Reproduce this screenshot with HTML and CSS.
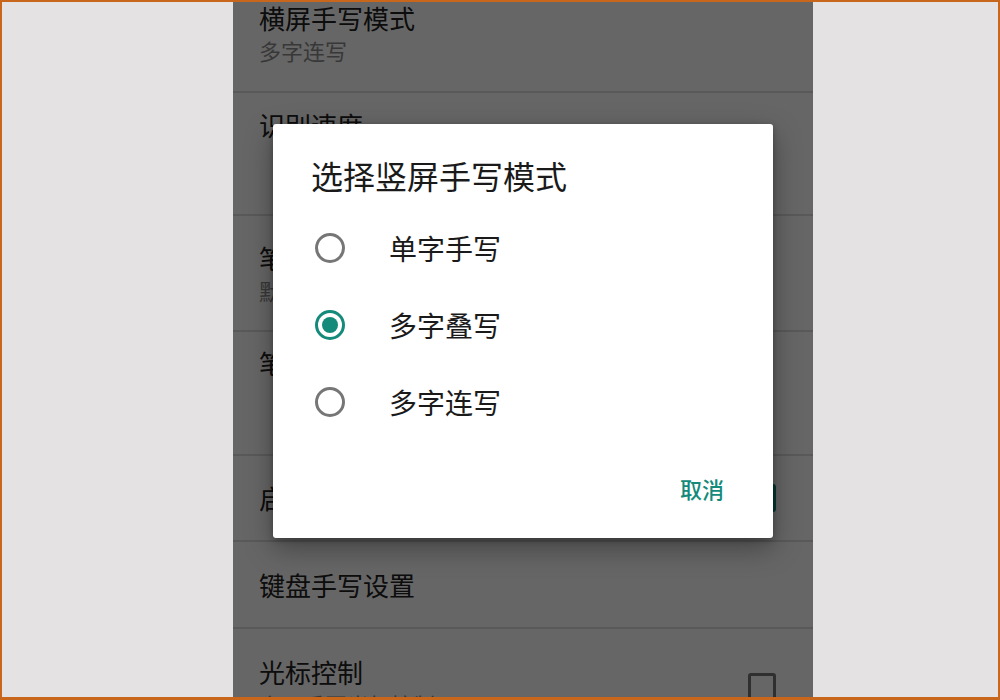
FILE: index.html
```html
<!DOCTYPE html>
<html lang="zh-CN">
<head>
<meta charset="utf-8">
<title>手写设置</title>
<link rel="stylesheet" href="styles.css">
</head>
<body>
<div class="screen">
  <div class="list">
    <div class="item item-1">
      <div class="texts">
        <div class="title">横屏手写模式</div>
        <div class="summary">多字连写</div>
      </div>
    </div>
    <div class="item item-2">
      <div class="texts">
        <div class="title">识别速度</div>
      </div>
    </div>
    <div class="item item-3">
      <div class="texts">
        <div class="title">笔迹颜色</div>
        <div class="summary">默认黑色</div>
      </div>
    </div>
    <div class="item item-4">
      <div class="texts">
        <div class="title">笔迹粗细</div>
      </div>
    </div>
    <div class="item item-5">
      <div class="texts">
        <div class="title">启用手写振动</div>
      </div>
      <div class="checkbox checked">
        <svg width="28" height="28" viewBox="0 0 28 28"><path d="M6 14.5l5 5 11-11" fill="none" stroke="#fff" stroke-width="3"/></svg>
      </div>
    </div>
    <div class="item item-6">
      <div class="texts">
        <div class="title">键盘手写设置</div>
      </div>
    </div>
    <div class="item item-7">
      <div class="texts">
        <div class="title">光标控制</div>
        <div class="summary">启用手写光标控制</div>
      </div>
      <div class="checkbox"></div>
    </div>
  </div>
  <div class="scrim"></div>
  <div class="dialog">
    <div class="dialog-title">选择竖屏手写模式</div>
    <div class="options">
      <div class="option">
        <svg class="radio" width="30" height="30" viewBox="0 0 30 30"><circle cx="15" cy="15" r="13.5" fill="none" stroke="#767676" stroke-width="3"/></svg>
        <span class="option-label">单字手写</span>
      </div>
      <div class="option">
        <svg class="radio" width="30" height="30" viewBox="0 0 30 30"><circle cx="15" cy="15" r="13.5" fill="none" stroke="#138a7a" stroke-width="3"/><circle cx="15" cy="15" r="8" fill="#138a7a"/></svg>
        <span class="option-label">多字叠写</span>
      </div>
      <div class="option">
        <svg class="radio" width="30" height="30" viewBox="0 0 30 30"><circle cx="15" cy="15" r="13.5" fill="none" stroke="#767676" stroke-width="3"/></svg>
        <span class="option-label">多字连写</span>
      </div>
    </div>
    <div class="actions">
      <div class="btn">取消</div>
    </div>
  </div>
</div>
</body>
</html>
```

FILE: styles.css
```css
html, body {
  margin: 0;
  padding: 0;
}

body {
  width: 1000px;
  height: 700px;
  box-sizing: border-box;
  border: 2px solid #c8661c;
  border-bottom-width: 3px;
  background: #e4e2e3;
  padding-left: 231px;
  overflow: hidden;
  font-family: "Noto Sans CJK SC", "Noto Sans", sans-serif;
}

.screen {
  position: relative;
  width: 580px;
  height: 695px;
  background: #ffffff;
  overflow: hidden;
}

.list {
  display: flex;
  flex-direction: column;
}

.item {
  display: flex;
  align-items: center;
  justify-content: space-between;
  border-bottom: 2px solid #dfdfdf;
  padding: 0 37px 0 26px;
}

.title {
  font-size: 26px;
  line-height: 30px;
  color: #212121;
}

.summary {
  margin-top: 4px;
  font-size: 22px;
  line-height: 26px;
  color: #8c8c8c;
}

.item-1 { align-items: flex-start; padding-top: 1px; padding-bottom: 28px; }
.item-2 { align-items: flex-start; padding-top: 17px; padding-bottom: 74px; }
.item-3 { align-items: flex-start; padding-top: 27px; padding-bottom: 27px; }
.item-4 { align-items: flex-start; padding-top: 16px; padding-bottom: 76px; }
.item-5 { min-height: 84px; }
.item-6 { min-height: 85px; }
.item-7 { padding-top: 28px; padding-bottom: 20px; border-bottom: none; }

.checkbox {
  width: 28px;
  height: 28px;
  box-sizing: border-box;
  border: 3px solid #757575;
  border-radius: 3px;
}

.checkbox.checked {
  border: none;
  background: #138a7a;
}

.checkbox svg {
  display: block;
}

.scrim {
  position: absolute;
  inset: 0;
  background: rgba(0, 0, 0, 0.6);
}

.dialog {
  position: absolute;
  left: 40px;
  top: 122px;
  width: 500px;
  background: #ffffff;
  border-radius: 3px;
  box-shadow: 0 10px 28px rgba(0, 0, 0, 0.35), 0 2px 6px rgba(0, 0, 0, 0.25);
}

.dialog-title {
  padding: 31px 38px 0;
  font-size: 32px;
  line-height: 40px;
  color: #1a1a1a;
}

.options {
  margin-top: 14px;
  display: flex;
  flex-direction: column;
}

.option {
  display: flex;
  align-items: center;
  height: 77px;
  padding-left: 42px;
}

.radio {
  display: block;
  flex: none;
}

.option-label {
  margin-left: 44px;
  font-size: 28px;
  line-height: 34px;
  color: #1a1a1a;
}

.actions {
  display: flex;
  justify-content: flex-end;
  padding: 24px 33px 26px;
}

.btn {
  height: 48px;
  padding: 0 16px;
  display: flex;
  align-items: center;
  font-size: 22px;
  font-weight: 500;
  color: #138a7a;
}
```
